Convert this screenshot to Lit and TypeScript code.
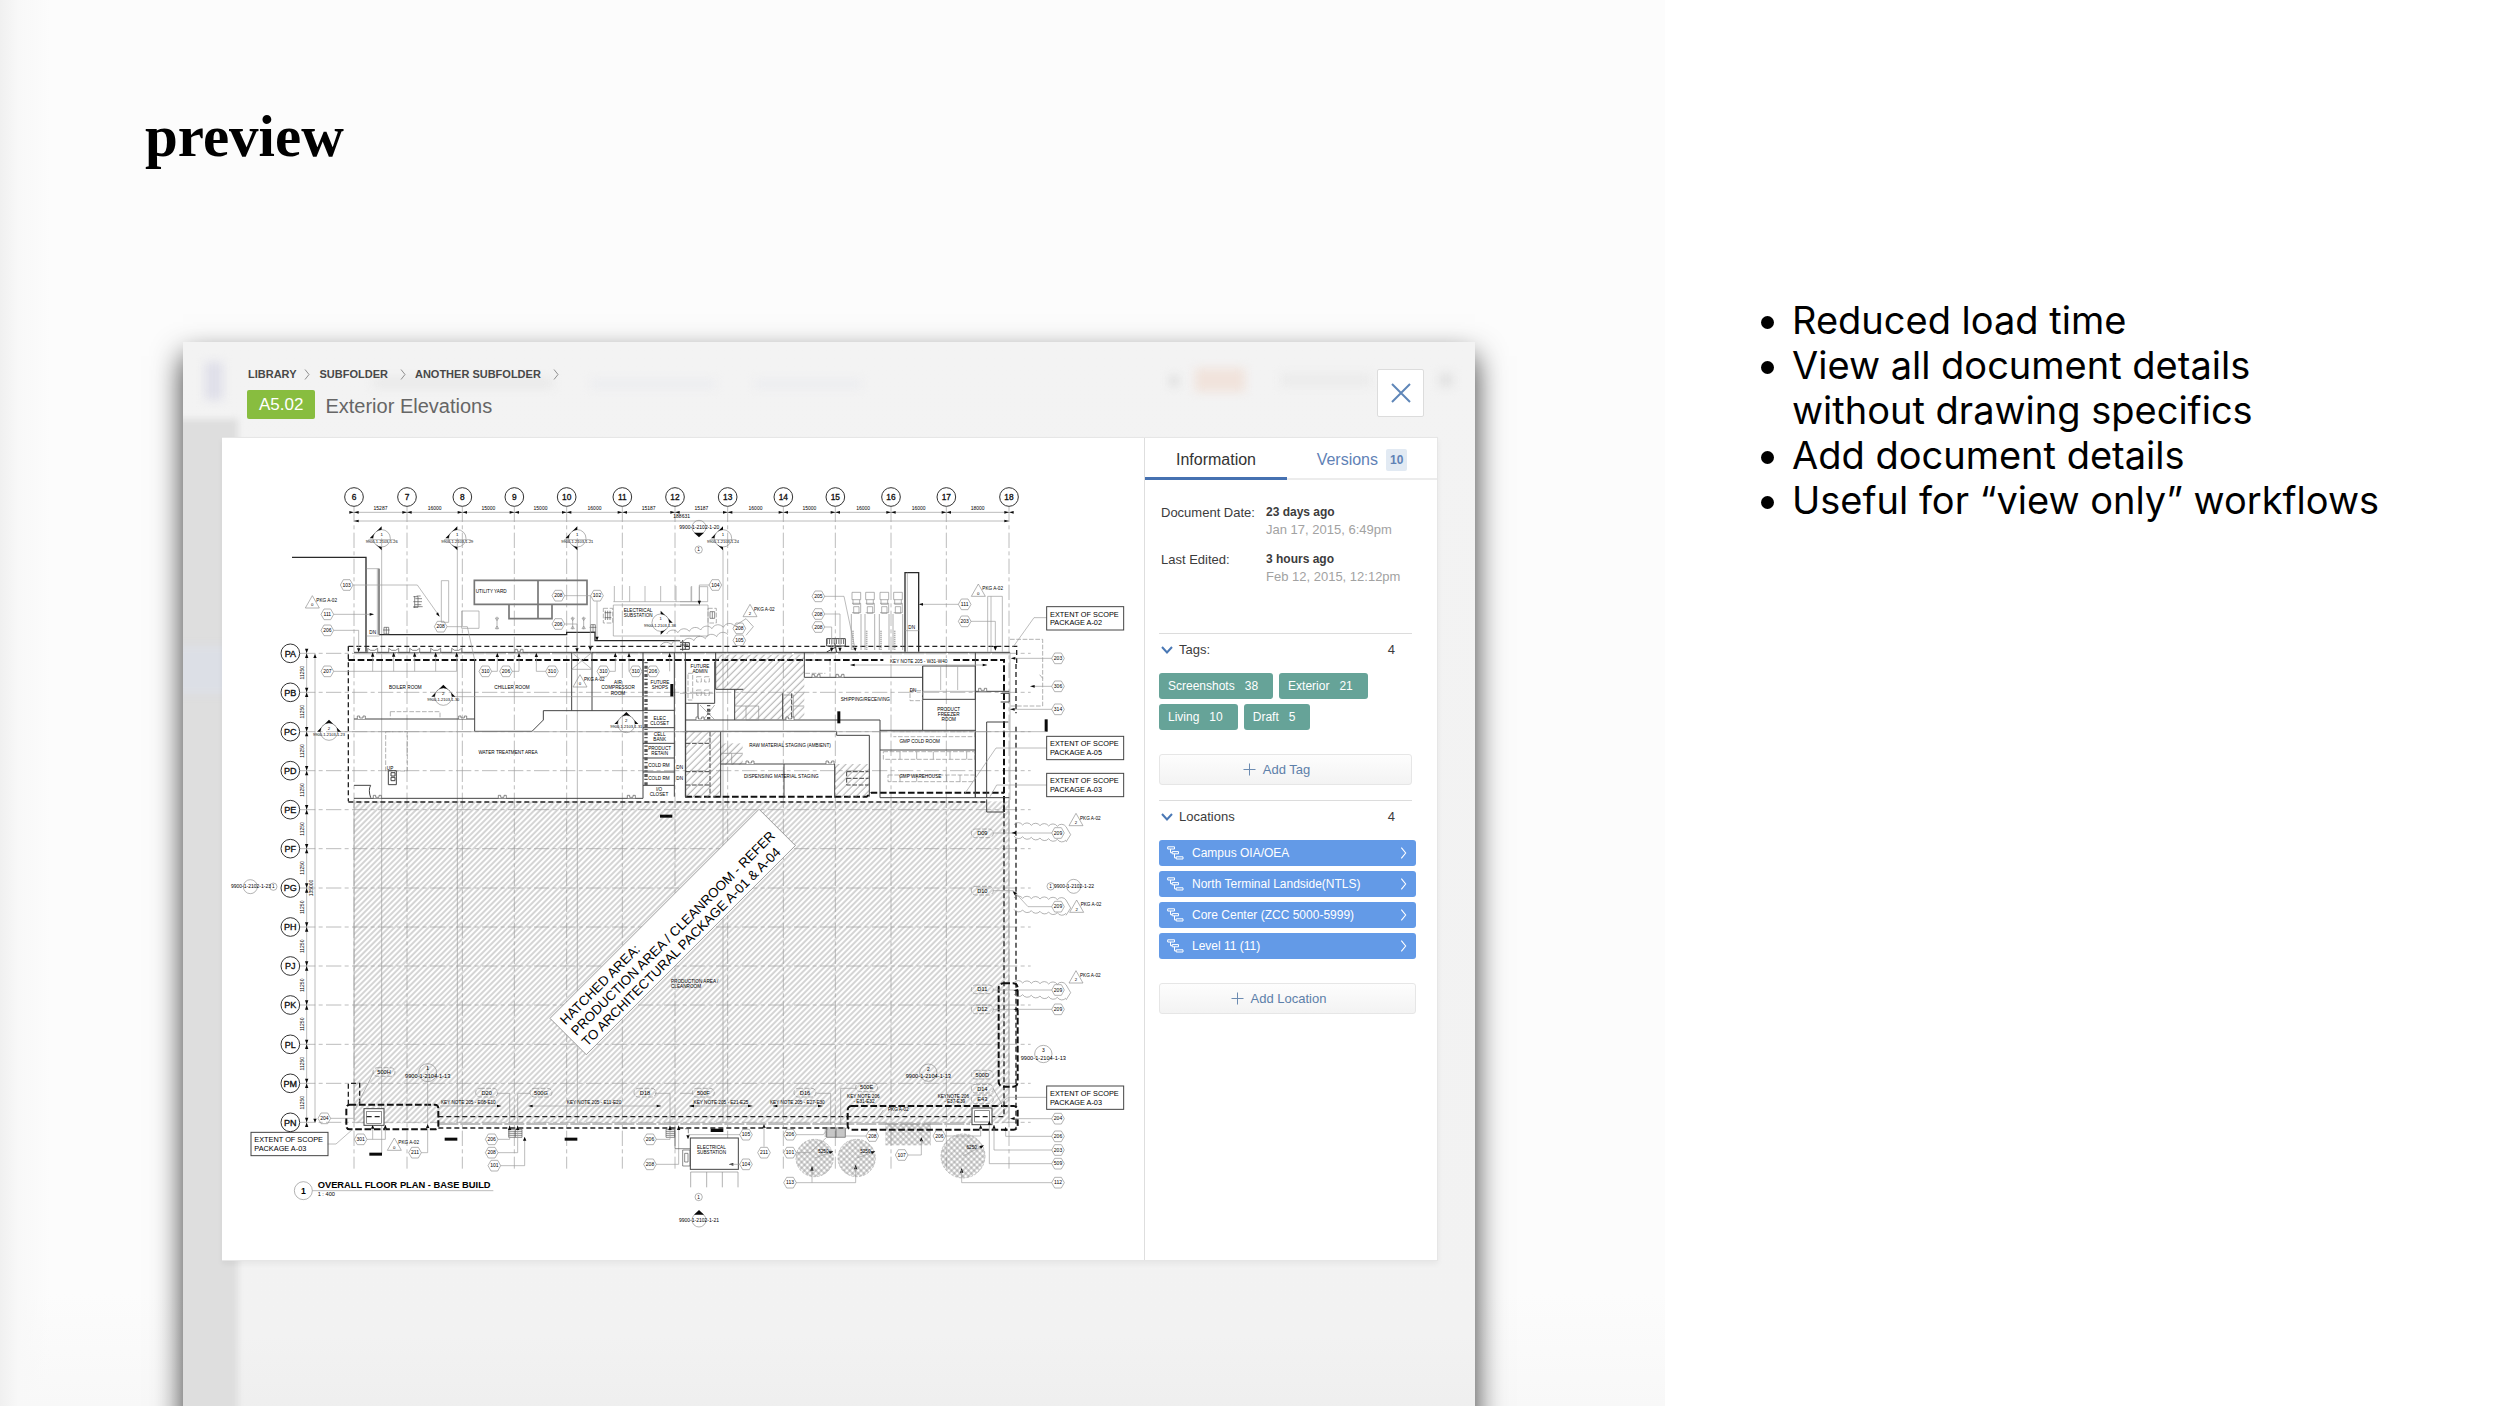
import { LitElement, html, svg, css } from "lit";
import { customElement } from "lit/decorators.js";

type Mark = [number, number, string];

/* ---------- Floor plan: small drawing helpers (plan units) ---------- */

const label = (x: number, y: number, text: string, size = 14, anchor = "middle") =>
  svg`<text class="lbl" x=${x} y=${y} font-size=${size} text-anchor=${anchor}>${text}</text>`;

const hex = ([x, y, t]: Mark) => svg`
  <path class="mark" d="M${x - 19} ${y}L${x - 10} ${y - 16}H${x + 10}L${x + 19} ${y}L${x + 10} ${y + 16}H${x - 10}Z"/>
  ${label(x, y + 5, t, 15)}`;

const pill = ([x, y, t]: Mark) => svg`
  <rect class="mark dashy" x=${x - 33} y=${y - 13} width="66" height="26" rx="13"/>
  ${label(x, y + 6, t, 17)}`;

const tri = ([x, y, t]: Mark) => svg`
  <path class="mark" d="M${x} ${y - 20}L${x + 21} ${y + 17}H${x - 21}Z"/>
  ${label(x, y + 12, t, 13)}
  ${label(x + 12, y - 1, "PKG A-02", 14, "start")}`;

/* Section marker whose arrow points left, with its sheet number across it. */
const sectionLeft = ([x, y, t]: Mark) => svg`
  <circle class="mark" cx=${x} cy=${y} r="26"/>
  <path class="ink" d="M${x} ${y - 36}L${x - 36} ${y}H${x - 26}A26 26 0 0 1 ${x} ${y - 26}Z"/>
  <path class="ink" d="M${x} ${y + 26}A26 26 0 0 1 ${x - 18} ${y + 18}L${x} ${y + 36}Z"/>
  <path class="thin" d="M${x - 40} ${y + 4}H${x + 40}"/>
  ${label(x, y - 6, "1", 13)}${label(x, y + 13, t, 12)}`;

/* Section marker whose arrow points up. */
const sectionUp = ([x, y, t]: Mark) => svg`
  <circle class="mark" cx=${x} cy=${y} r="26"/>
  <path class="ink" d="M${x} ${y - 36}L${x + 36} ${y}H${x + 26}A26 26 0 0 0 ${x - 26} ${y}H${x - 36}Z"/>
  ${label(x, y - 6, "2", 13)}${label(x, y + 13, t, 12)}`;

const scope = (x: number, y: number, code: string) => svg`
  <rect class="frame" x=${x} y=${y} width="231" height="70"/>
  ${label(x + 10, y + 30, "EXTENT OF SCOPE", 22, "start")}
  ${label(x + 10, y + 56, `PACKAGE ${code}`, 22, "start")}`;

const scallops = (x: number, y: number, n: number, step: number, rise: number) =>
  `M${x} ${y}` + Array.from({ length: n }, () => `a${Math.abs(step / 2) + 3} ${Math.abs(step / 2) + 3} 0 0 1 ${step} ${rise}`).join("");

const cloud = (x: number, y: number, n = 6) => svg`
  <path class="mark" d="${scallops(x, y - 24, n, 26, 1)}l14 24l-14 22${scallops(x + n * 26, y + 22, n, -26, -2)}"/>`;

const door = (x: number, y: number) =>
  svg`<path class="wallthin erase" d="M${x - 12} ${y}v-9h7v6h10v-6h7v9"/>`;

/* ---------- Floor plan: data ---------- */

const columns: Mark[] = [
  [402, 0, "6"], [561, 0, "7"], [727, 0, "8"], [883, 0, "9"], [1040, 0, "10"], [1207, 0, "11"], [1365, 0, "12"],
  [1523, 0, "13"], [1690, 0, "14"], [1846, 0, "15"], [2013, 0, "16"], [2179, 0, "17"], [2367, 0, "18"],
];
const spans = ["15287", "16000", "15000", "15000", "16000", "15187", "15187", "16000", "15000", "16000", "16000", "18000"];
const rows: Mark[] = ["PA", "PB", "PC", "PD", "PE", "PF", "PG", "PH", "PJ", "PK", "PL", "PM", "PN"].map(
  (n, i) => [211, Math.round(580 + i * 117.25), n] as Mark
);

const gridLayer = svg`
  <path class="thin" d="M402 157H2367M402 183H2367"/>
  <path class="thin" d="M260 580V1988M285 580V1988"/>
  ${columns.map(([x, , n]) => svg`
    <path class="grid" d="M${x} 140V2126"/>
    <path class="ink" d="M${x} 157l-14-4v8zM${x} 157l14-4v8z"/>
    <circle class="bubble" cx=${x} cy="111" r="28"/>
    <text class="lbl mid" x=${x} y="120" font-size="25" text-anchor="middle">${n}</text>`)}
  ${spans.map((s, i) => label((columns[i][0] + columns[i + 1][0]) / 2, 150, s, 15))}
  ${label(1385, 175, "188631", 15)}
  <path class="ink" d="M402 183l14-4v8zM2367 183l-14-4v8zM285 582l-5 12h10zM285 1988l-5-12h10z"/>
  ${rows.map(([x, y, n]) => svg`
    <path class="grid" d="M240 ${y}H2432"/>
    <path class="ink" d="M260 ${y}l-5-14h10zM260 ${y}l-5 14h10z"/>
    <circle class="bubble" cx=${x} cy=${y} r="28"/>
    <text class="lbl mid" x=${x} y=${y + 10} font-size="27" text-anchor="middle">${n}</text>`)}
  ${rows.slice(0, 12).map(([, y]) => svg`
    <text class="lbl" font-size="15" text-anchor="middle" transform="translate(253 ${y + 58}) rotate(-90)">11250</text>`)}
  <text class="lbl" font-size="15" text-anchor="middle" transform="translate(279 1284) rotate(-90)">135000</text>`;

const productionLayer = svg`
  <rect class="hatch" x="402" y="1024" width="1965" height="966"/>
  <path class="thin" d="M402 1020V1990M2367 1020V1990"/>
  <path class="thin" d="M485 235V2080M712 235V1990M1072 235V1990M1509 265V1990"/>
  ${label(1353, 1569, "PRODUCTION AREA /", 14, "start")}
  ${label(1353, 1585, "CLEANROOM", 14, "start")}`;

const northWest = svg`
  <path class="heavy" d="M216 292H438V575"/>
  <path class="thin" d="M440 326H478M440 528H478M472 326V524"/>
  <path class="heavy" d="M477 524H1040V517H1125V542H1380"/>
  <path class="double" d="M477 326V524"/>
  <path class="thin" d="M664 362h22v125h-22zM725 453h52v52h-52z"/>
  <path class="double" d="M763 361H1101V433H763ZM954 361V476M867 433V476H996V433"/>
  <path class="thin" d="M1180 435H1440M1180 435V528H1440M1183 378V425M1229 378V425M1275 378V425M1322 378V425M1368 378V425M1415 378V425M1180 425H1440"/>
  <path class="mark dashy" d="M1150 445h28v44h-28z"/>
  <path class="wallthin" d="M1156 452v28M1163 452v28M1170 452v28M1154 458h20M1154 473h20"/>
  <path class="wallthin" d="M580 410h14v32h-14M584 408v36M590 408h12M586 416h20M580 425h26M584 434h20M580 440h28"/>
  <path class="wallthin" d="M492 502h14v20h-14zM499 502v20M489 510h20M1112 494h14v22h-14zM1119 494v22M1109 502h20"/>
  <path class="mark" d="M831 470v38M826 474h10l-5 8zM826 506h10l-5-8zM1058 470v38M1053 474h10l-5 8zM1053 506h10l-5-8zM1091 470v38M1086 474h10l-5 8zM1086 506h10l-5-8z"/>
  <path class="wall" d="M402 577H1380"/>
  <path class="wall" d="M764 600V814H936L970 780V752H1269V577M1055 577V752M1116 577V752M402 777H764M402 1015H1269V600M1363 577V1010M1396 577V1010"/>
  <path class="wall" d="M1269 751H1363M1269 803H1363M1269 850H1363M1269 894H1363M1269 936H1363M1269 976H1363M402 976H452Q444 990 452 1013"/>
  <path class="thin" d="M1055 577L1116 628H1055L1116 577"/>
  <path class="mark dashy" d="M511 755H660V777M511 755V777M497 815h65v118h-65z"/>
  <path class="wall" d="M505 932h24v42h-24zM513 938h12v10h-12zM513 952h12v10h-12z"/>
  <path class="steps" d="M1278 606V976"/>
  <rect class="ink" x="1351" y="672" width="9" height="38"/>
  <rect class="ink" x="1320" y="1064" width="37" height="9"/>
  ${[458, 521, 584, 647, 710].map((x) => svg`<path class="thin" d="M${x} 634V585"/><path class="wallthin erase" d="M${x - 15} 577v-12l9 6h12l9-6v12"/><path class="ink" d="M${x} 577l-5 13h10z"/>`)}
  ${[832, 897, 949, 1186, 1227, 1349].map((x) => svg`<path class="thin" d="M${x} 634V585"/><path class="ink" d="M${x} 578l-5 13h10z"/>`)}
  ${[[424, 777], [728, 777], [472, 1015], [847, 1015], [1234, 1015], [897, 577]].map(([x, y]) => door(x, y))}
  <path class="thin" d="M399 375H592L657 467M341 463H460M341 511H416V577M341 634H710M681 500H742L764 600M1034 407H1111V577M1131 424V540M1034 492H1071V577M703 710H1363M360 815H1440M815 634h17M877 634h20M949 634h28M1169 634h17"/>
  <path class="ink" d="M659 470l-11-8 6-5zM462 463l-13-4v8zM416 577l-5-12h10zM1071 577l-5-12h10zM1111 572l-5-12h10zM1131 542l-5-12h10z"/>
  ${([[380, 375, "103"], [322, 463, "111"], [322, 511, "206"], [322, 634, "207"], [662, 500, "208"], [1015, 407, "208"],
    [1131, 407, "102"], [1015, 492, "206"], [796, 634, "310"], [858, 634, "206"], [996, 634, "310"], [1150, 634, "310"],
    [1247, 634, "310"], [1299, 634, "206"]] as Mark[]).map(hex)}
  ${([[277, 427, "0"], [1080, 664, "0"]] as Mark[]).map(tri)}
  ${([[485, 235, "9900-1-2103-1-26"], [712, 235, "9900-1-2103-1-29"], [1072, 235, "9900-1-2103-1-21"]] as Mark[]).map(sectionLeft)}
  ${([[327, 815, "9900-1-2103-1-23"], [670, 710, "9900-1-2103-1-30"], [1219, 792, "9900-1-2103-1-31"]] as Mark[]).map(sectionUp)}
  <circle class="mark" cx="1322" cy="488" r="26"/>
  <path class="ink" d="M1322 452l36 36h-10a26 26 0 0 0-26-26zM1322 524v-10a26 26 0 0 0 18-8z"/>
  ${label(1322, 481, "1", 12)}${label(1320, 501, "9900-1-2103-1-36", 12)}
  ${label(767, 399, "UTILITY YARD", 14, "start")}
  ${label(1211, 456, "ELECTRICAL", 14, "start")}${label(1211, 472, "SUBSTATION", 14, "start")}
  ${label(458, 522, "DN")}${label(510, 929, "UP")}${label(1379, 926, "DN")}${label(1379, 960, "DN")}
  ${label(556, 688, "BOILER ROOM")}${label(876, 688, "CHILLER ROOM")}${label(864, 883, "WATER TREATMENT AREA")}
  ${label(1194, 672, "AIR")}${label(1194, 688, "COMPRESSOR")}${label(1194, 704, "ROOM")}
  ${label(1320, 672, "FUTURE")}${label(1320, 688, "SHOPS")}
  ${label(1319, 780, "ELEC")}${label(1319, 796, "CLOSET")}${label(1319, 827, "CELL")}${label(1319, 843, "BANK")}
  ${label(1319, 870, "PRODUCT")}${label(1319, 886, "RETAIN")}${label(1317, 920, "COLD RM")}${label(1317, 960, "COLD RM")}
  ${label(1317, 994, "I/O")}${label(1317, 1009, "CLOSET")}`;

const northEast = svg`
  <g transform="translate(1380 0)">
    <rect class="hatchwide" x="107" y="584" width="266" height="104"/>
    <rect class="hatchwide" x="164" y="688" width="209" height="90"/>
    <rect class="hatchwide" x="17" y="813" width="105" height="200"/>
    <rect class="hatchwide" x="122" y="850" width="66" height="64"/>
    <rect class="hatchwide" x="464" y="912" width="104" height="100"/>
    <path class="heavy" d="M675 575V338H716V575"/>
    <path class="thin" d="M682 338V575M675 512H716M923 575V409H967V575M933 409V575M0 528H84V435H0M0 425H83V380H58V430M33 380V425"/>
    <path class="mark dashy" d="M84 445h25v44H84z"/>
    <path class="wallthin" d="M90 455h14v20H90zM97 455v20"/>
    ${[516, 557, 600, 641].map((x) => svg`
      <path class="mark" d="M${x} 397h26v22h-26zM${x + 3} 419v14h20v-14M${x} 430h26v28h-26M${x + 5} 440h16v20h-16zM${x - 2} 462V570M${x + 27} 462V570"/>
      <path class="tyre" d="M${x + 3} 512V570"/>`)}
    <path class="wall" d="M0 577H990M17 605V1013M17 730H104V605M54 730V780M107 577V688H190M164 688V780M308 700V778M373 577V652H728M17 780H600V812"/>
    <path class="wall" d="M728 618H886V718H728ZM728 618V810M600 811H886V1013M600 811V1013M600 870H886M886 577V1013M886 694H988M920 1013V786H985M17 814H470V826H568V1010M122 814V1013M122 912H464V1013M312 912V1013M600 1013H988"/>
    <path class="thin" d="M782 618V690M833 618V690M728 694H886"/>
    <path class="wall" d="M920 1018V1056H972V1018"/>
    <path class="mark" d="M198 738h38v42h-38zM312 705h28v70M164 738h34M340 738h32M122 880h66M155 880v34M60 735l44 44M104 735l-34 44"/>
    <path class="mark dashy" d="M610 875H884V898H610ZM624 945H884V965H624ZM640 815H884V830H640M690 692h38v30h-38z"/>
    <path class="mark" d="M660 875v23M710 875v23M760 875v23M810 875v23M860 875v23M660 945v20M710 945v20M800 945v20M840 945v20"/>
    <path class="mark dashy" d="M376 600h74v52M376 640h60M24 640h14v80h-14zM50 650h14v16h-14zM74 650h14v16h-14zM50 690h14v16h-14zM74 690h14v16h-14z"/>
    <path class="steps" d="M86 735V778"/>
    <path class="wall dashy" d="M90 815V1000M17 850H90M17 935H90M17 975H90M500 935V975H566M500 935H566M500 955H566M335 700V778"/>
    <path class="tread" d="M440 545H496"/>
    <path class="wall" d="M440 536h56v22h-56zM464 550l6 26M470 560l-30 16"/>
    <path class="mark dashy" d="M990 538H1088V738H992M1088 655l-10-12"/>
    <path class="wall" d="M962 700h26v26h-26"/>
    <path class="thin" d="M990 577V1020"/>
    <rect class="ink" x="472" y="754" width="9" height="36"/>
    <rect class="ink" x="1094" y="778" width="9" height="37"/>
    ${[[480, 652], [408, 652], [908, 694], [330, 780], [60, 780], [210, 912], [450, 912]].map(([x, y]) => door(x, y))}
    <path class="thin" d="M88 375H58V430M0 700H100M0 815H1098M433 409H492L526 570M433 462H480V575M433 501H455V575M835 433H720M873 484H946V570M1115 595H998M1115 679H1056M1115 748H992M1100 473H1062L1000 560M1100 864H948L855 1000M1100 975H950L930 1010M512 615H920"/>
    <path class="ink" d="M716 433l13-4v8zM946 572l-6-14h12zM992 595l14-4v8zM1050 679l14-4v8zM990 748l14-4v8zM58 434l-5-12h10zM526 574l-6-11h10zM480 575l-5-12h10zM455 575l-5-12h10zM510 615l14-4v8zM922 615l-14-4v8z"/>
    <path class="wall" d="M0 548h28v20H0M0 555h24M8 540v32M16 548v20"/>
    ${([[106, 375, "104"], [178, 505, "208"], [178, 541, "105"], [415, 409, "205"], [415, 462, "208"], [415, 501, "208"],
      [854, 433, "111"], [854, 484, "203"], [1134, 595, "203"], [1134, 679, "306"], [1134, 748, "314"]] as Mark[]).map(hex)}
    ${([[210, 453, "2"], [895, 392, "0"]] as Mark[]).map(tri)}
    <path class="mark" d="${scallops(-40, 522, 6, 34, -4)}l34-22l22 24l-22 26"/>
    <path class="mark" d="${scallops(-60, 560, 6, 34, -6)}"/>
    ${sectionLeft([129, 235, "9900-1-2103-1-24"])}
    <circle class="mark" cx="57" cy="202" r="21"/><path class="ink" d="M42 218h30l-15 14z"/>
    ${label(58, 207, "9900-1-2102-1-20", 15)}
    <circle class="mark" cx="56" cy="269" r="11"/>${label(56, 274, "1")}
    ${label(695, 506, "DN")}${label(699, 697, "DN")}
    ${label(60, 623, "FUTURE")}${label(60, 639, "ADMIN")}
    <path class="erasefill" d="M622 594h196v18h-196z"/>
    ${label(716, 608, "KEY NOTE 205 - W31-W40")}
    ${label(556, 723, "SHIPPING/RECEIVING")}
    ${label(806, 752, "PRODUCT")}${label(806, 768, "FREEZER")}${label(806, 784, "ROOM")}
    ${label(719, 848, "GMP COLD ROOM")}${label(721, 954, "GMP WAREHOUSE")}
    ${label(330, 861, "RAW MATERIAL STAGING (AMBIENT)")}
    ${label(304, 955, "DISPENSING MATERIAL STAGING")}
    ${scope(1100, 440, "A-02")}${scope(1100, 829, "A-05")}${scope(1100, 940, "A-03")}
  </g>`;

const southWest = svg`
  <g transform="translate(0 1020)">
    <rect class="ink" x="448" y="1058" width="38" height="9"/>
    <rect class="ink" x="674" y="1013" width="38" height="9"/>
    <rect class="ink" x="1034" y="1013" width="38" height="9"/>
    <rect class="erasefill wall" x="432" y="926" width="60" height="50"/>
    <rect class="wallthin" x="440" y="934" width="44" height="36"/>
    <path class="dash" d="M440 950H484"/>
    <rect class="dashheavy" x="379" y="914" width="276" height="74" rx="10"/>
    <path class="dash" d="M385 914V850H419V914"/>
    <path class="wallthin" d="M866 988h40v24h-40zM1338 988h26v24h-26zM866 994h40M866 1000h40M866 1006h40M1338 994h26M1338 1000h26M1338 1006h26M886 988v24"/>
    <path class="thin" d="M332 955H400M441 1018H496V975M458 1018V975M604 1058H623V800M834 1018H869V980M834 1058H893V980M842 1097H914V1015M833 880H869V970M930 880H893V970M1309 1018H1350V980M1309 1093H1376V980M1305 880H1350V970M460 818L405 930M323 1032H348L398 988M660 918H840M930 918H1322M1410 918H1440"/>
    <path class="ink" d="M845 918l-14-4v8zM924 918l14-4v8zM1324 918l-14-4v8zM1408 918l14-4v8zM458 974l-5 12h10zM496 974l-5 12h10zM623 972l-5 12h10zM914 1010l-5 12h10zM869 976l-5 14h10zM893 976l-5 14h10zM1350 976l-5 14h10zM1376 976l-5 14h10z"/>
    ${([[313, 955, "204"], [422, 1018, "301"], [585, 1058, "211"], [815, 1018, "206"], [815, 1058, "208"], [823, 1097, "101"],
      [1290, 1018, "206"], [1290, 1093, "208"]] as Mark[]).map(hex)}
    ${([[492, 816, "500H"], [800, 878, "D20"], [963, 878, "500G"], [1275, 878, "D18"]] as Mark[]).map(pill)}
    ${tri([523, 1034, "0"])}
    ${label(745, 911, "KEY NOTE 205 - E08-E10")}${label(1122, 911, "KEY NOTE 205 - E11-E20")}
    <circle class="mark" cx="623" cy="818" r="27"/>${label(623, 810, "1", 15)}${label(623, 833, "9900-1-2104-1-13", 17)}
    <circle class="mark" cx="91" cy="260" r="21"/><circle class="mark" cx="160" cy="260" r="11"/>
    ${label(93, 265, "9900-1-2102-1-23", 15)}${label(160, 265, "1")}
    ${scope(93, 997, "A-03")}
    <circle class="mark" cx="250" cy="1172" r="27"/>
    <text class="lbl strong" x="250" y="1181" font-size="26" text-anchor="middle">1</text>
    <path class="thin" d="M277 1172H820"/>
    <text class="lbl strong" x="293" y="1165" font-size="28">OVERALL FLOOR PLAN - BASE BUILD</text>
    ${label(293, 1187, "1 : 400", 17, "start")}
  </g>`;

const southEast = svg`
  <g transform="translate(1380 1020)">
    <rect class="ink" x="92" y="986" width="38" height="10"/>
    <rect class="erasefill frame" x="31" y="1014" width="144" height="94"/>
    <path class="wallthin" d="M8 1050h22v48H8zM14 1060h10v26H14zM-15 980v66h46M25 1000v-14h-10"/>
    <path class="mark" d="M32 1162V1116H174V1162M80 1116V1162M127 1116V1162"/>
    <path class="wallthin" d="M440 984h56v28h-56zM434 990h62M434 996h62M434 1002h62M434 1008h62M468 984v28"/>
    <rect class="cross" x="616" y="970" width="137" height="66"/>
    <circle class="tree" cx="404" cy="1074" r="56"/><circle class="tree" cx="530" cy="1074" r="56"/><circle class="tree" cx="849" cy="1068" r="66"/>
    <path class="thin" d="M404 1074L456 1056M530 1074L582 1056M849 1068L908 1038"/>
    <path class="ink" d="M460 1054l-14 0 4 8zM586 1054l-14 0 4 8zM912 1036l-14 2 5 8zM396 1098l-5 14h10zM527 1094l-5 14h10zM845 1104l-5 14h10zM724 1012l-5 12h10zM252 972l-5 12h10zM146 1093l14-4v8zM24 1018l-5-12h10z"/>
    <rect class="dashheavy" x="503" y="918" width="510" height="71" rx="12"/>
    <rect class="dashheavy" x="956" y="550" width="57" height="310" rx="14"/>
    <rect class="erasefill frame" x="876" y="924" width="60" height="50"/>
    <rect class="wallthin" x="884" y="932" width="44" height="34"/>
    <path class="dash" d="M884 950H928"/>
    <path class="thin" d="M25 1004H180M179 1093H150M252 1040V980M349 1004H430L445 985M349 1058H390L440 1012M496 1008H558M684 1065H724V1020M797 1008H902V980M349 1148H527V1100M396 1148V1105M1115 1148H845V1110M1115 1091H928V975M1115 1050H942V975M1115 1009H977V985M1115 956H1000M1115 628H940M1115 570H940M1115 99H940M940 272H1000L1044 320H1115M1100 892H985L950 920M410 880H452V975M530 865H482V975M940 866L975 930M28 918H218M278 918H428M590 960L610 930M0 880H40"/>
    <path class="ink" d="M28 918l14-4v8zM218 918l-14-4v8zM278 918l14-4v8zM428 918l-14-4v8zM994 99l14-5v9zM998 274l14 5-8 7zM1000 571l14-4v8zM1000 628l14-4v8zM990 956l14-5v9zM902 974l-5 12h10zM942 974l-5 12h10zM977 980l-5 12h10zM928 962l-5 12h10z"/>
    ${cloud(1002, 98)}${cloud(1002, 318)}${cloud(1002, 572)}
    ${([[1134, 99, "209"], [1134, 320, "209"], [1134, 570, "209"], [1134, 628, "209"], [1134, 956, "204"], [1134, 1009, "206"],
      [1134, 1050, "203"], [1134, 1091, "509"], [1134, 1148, "112"], [198, 1004, "105"], [198, 1093, "104"], [252, 1058, "211"],
      [330, 1004, "206"], [330, 1058, "101"], [577, 1008, "208"], [665, 1065, "107"], [778, 1008, "206"], [330, 1148, "113"]] as Mark[]).map(hex)}
    ${([[70, 878, "500F"], [375, 878, "D16"], [560, 862, "500E"], [907, 100, "D09"], [907, 272, "D10"], [907, 568, "D11"],
      [907, 628, "D12"], [907, 824, "500D"], [907, 866, "D14"], [907, 898, "E43"]] as Mark[]).map(pill)}
    ${([[1188, 60, "2"], [1190, 320, "2"], [1188, 532, "2"]] as Mark[]).map(tri)}
    ${label(430, 1060, "5250")}${label(556, 1060, "5250")}${label(875, 1046, "6250")}
    ${label(51, 1047, "ELECTRICAL", 14, "start")}${label(51, 1063, "SUBSTATION", 14, "start")}
    ${label(123, 911, "KEY NOTE 205 - E21-E25")}${label(352, 911, "KEY NOTE 205 - E27-E30")}
    ${label(550, 894, "KEY NOTE 206")}${label(552, 910, "- E31-E32")}
    ${label(820, 894, "KEYNOTE 206")}${label(824, 910, "- E37-E39")}
    ${label(655, 933, "PKG A-02")}
    <circle class="mark" cx="745" cy="818" r="26"/>${label(745, 812, "2", 15)}${label(745, 834, "9900-1-2104-1-13", 17)}
    <circle class="mark" cx="1090" cy="762" r="26"/>${label(1090, 757, "3", 15)}${label(1090, 780, "9900-1-2104-1-13", 17)}
    <circle class="mark" cx="1181" cy="259" r="21"/><circle class="mark" cx="1112" cy="259" r="11"/>
    ${label(1182, 264, "9900-1-2102-1-22", 15)}${label(1112, 264, "1")}
    <circle class="mark" cx="56" cy="1191" r="11"/>${label(56, 1196, "1")}
    <circle class="mark" cx="57" cy="1260" r="21"/><path class="ink" d="M57 1230l15 14H42z"/>
    ${label(57, 1265, "9900-1-2102-1-21", 15)}
    ${scope(1100, 858, "A-03")}
  </g>`;

const boundaryLayer = svg`
  <path class="dash" d="M385 559H2390V612M385 559V1024M2388 612V760M2388 800V2004M385 1026H2300"/>
  <path class="dashheavy" d="M385 600H1990M2200 600H2352V1060"/>
  <path class="dash" d="M2352 1060V1970"/>
  <path class="dashheavy" d="M1396 1010H1940L1955 998H2352"/>
  <path class="dash" d="M655 1970H2352M655 2004H1880"/>
  <path class="band" d="M402 580H2367M655 1992H2250"/>`;

const noteLayer = svg`
  <g transform="translate(990 1675) rotate(-45)">
    <rect class="note" width="887" height="154"/>
    <text class="lbl" x="18" y="48" font-size="40">HATCHED AREA:</text>
    <text class="lbl" x="18" y="94" font-size="40">PRODUCTION AREA / CLEANROOM - REFER</text>
    <text class="lbl" x="18" y="140" font-size="40">TO ARCHITECTURAL PACKAGE A-01 &amp; A-04</text>
  </g>`;

@customElement("floor-plan")
export class FloorPlan extends LitElement {
  static styles = css`
    :host { display: block; }
    svg { display: block; width: 100%; height: auto; font-family: "Liberation Sans", Arial, sans-serif; }
    path, rect, circle { fill: none; }
    .lbl { fill: #000; }
    .mid { stroke: #1c1c1c; stroke-width: 1; }
    .strong { font-weight: 700; }
    .ink { fill: #0a0a0a; }
    .thin { stroke: #9a9a9a; stroke-width: 2; }
    .mark { stroke: #8c8c8c; stroke-width: 2; }
    .grid { stroke: #9c9c9c; stroke-width: 2; stroke-dasharray: 46 10 12 10; }
    .bubble { fill: #fff; stroke: #333; stroke-width: 3; }
    .heavy { stroke: #2a2a2a; stroke-width: 4; }
    .double { stroke: #777; stroke-width: 5; }
    .wall { stroke: #444; stroke-width: 3; }
    .wallthin { stroke: #555; stroke-width: 2; }
    .dashy { stroke-dasharray: 14 5; }
    .erase { fill: #fff; }
    .erasefill { fill: #fff; }
    .frame { stroke: #444; stroke-width: 3; }
    .note { fill: #fff; stroke: #777; stroke-width: 2; }
    .dash { stroke: #222; stroke-width: 4; stroke-dasharray: 15 9; }
    .dashheavy { stroke: #111; stroke-width: 6; stroke-dasharray: 20 8; }
    .band { stroke: #bdbdbd; stroke-width: 6; stroke-dasharray: 60 6; }
    .steps { stroke: #555; stroke-width: 10; stroke-dasharray: 4 7 9 5; }
    .tread { stroke: #777; stroke-width: 14; stroke-dasharray: 3 4; }
    .tyre { stroke: #999; stroke-width: 5; stroke-dasharray: 3 3; }
    .hatch { fill: url(#hatch); }
    .hatchwide { fill: url(#hatchwide); }
    .cross { fill: url(#cross); }
    .tree { fill: url(#cross); stroke: #aaa; stroke-width: 2; stroke-dasharray: 8 4; }
    .stroke { stroke: #7e7e7e; stroke-width: 2; }
  `;

  render() {
    return html`
      <svg viewBox="6 -66 2766 2466" role="img" aria-label="Overall floor plan">
        <defs>
          <pattern id="hatch" width="12" height="12" patternUnits="userSpaceOnUse" patternTransform="rotate(45)">
            <path class="stroke" d="M6 0V12"/>
          </pattern>
          <pattern id="hatchwide" width="15" height="15" patternUnits="userSpaceOnUse" patternTransform="rotate(45)">
            <path class="stroke" d="M7 0V15"/>
          </pattern>
          <pattern id="cross" width="12" height="12" patternUnits="userSpaceOnUse" patternTransform="rotate(45)">
            <path class="stroke" d="M6 0V12M0 6H12"/>
          </pattern>
        </defs>
        ${productionLayer}${gridLayer}${boundaryLayer}${northWest}${northEast}${southWest}${southEast}${noteLayer}
      </svg>`;
  }
}

/* ---------- Document preview ---------- */

const chevronRight = (w: number, h: number) =>
  html`<svg class="chev" width=${w} height=${h} viewBox="0 0 6 11" aria-hidden="true"><path d="M1 .5L5 5.5L1 10.5"/></svg>`;
const chevronDown = html`<svg class="down" width="12" height="8" viewBox="0 0 12 8" aria-hidden="true"><path d="M1 1L6 6.5L11 1"/></svg>`;
const plus = html`<svg class="plus" width="13" height="13" viewBox="0 0 13 13" aria-hidden="true"><path d="M6.500 .5V12.500M.5 6.500H12.500"/></svg>`;
const levels = html`<svg class="levels" width="17" height="14" viewBox="0 0 17 14" aria-hidden="true">
  <path d="M.7 .8H7.500V3H.7ZM5.200 5.600H11.500V7.800H5.200ZM9.200 10.800H16V13H9.200ZM3.500 3V6.700H5.200M7.500 7.800V11.900H9.200"/></svg>`;

@customElement("app-root")
export class AppRoot extends LitElement {
  static styles = css`
    :host { display: block; color: #3c3c3c; font-family: "Liberation Sans", Arial, Helvetica, sans-serif; }
    *, *::before { box-sizing: border-box; }
    h1, h2, ul, ol, dl, dd { margin: 0; padding: 0; }
    ul, ol { list-style: none; }
    button { font: inherit; color: inherit; border: 0; background: none; padding: 0; margin: 0; cursor: pointer; }
    a { color: inherit; text-decoration: none; }
    svg { fill: none; flex: none; }

    .slide { display: grid; grid-template-columns: 1665fr 835fr; height: 100vh; overflow: hidden; background: #fff; }
    .stage {
      display: flex; flex-direction: column; overflow: hidden;
      background: linear-gradient(to right, #f0f0f0, #f8f8f8 18px, rgba(252, 252, 252, 0) 50px), linear-gradient(#fcfcfc 92%, #f8f8f8);
    }
    .heading { padding: 104px 0 0 145px; font: 700 59px/64px "Liberation Serif", "Times New Roman", serif; color: #000; }
    .window {
      position: relative; flex: 1; margin: 174px 190px -40px 183px;
      background: linear-gradient(#f3f3f3, #f2f2f2 90%, #ededed);
      box-shadow: 0 14px 28px rgba(0, 0, 0, .78);
    }

    .backdrop { position: absolute; inset: 0; overflow: hidden; }
    .rail { position: absolute; left: -10px; top: 77px; bottom: -10px; width: 65px; background: #dedede; filter: blur(3px); }
    .haze { position: absolute; filter: blur(5px); }
    .logo { left: 22px; top: 20px; width: 18px; height: 38px; background: #dfdfe9; }
    .selected { left: -10px; top: 304px; width: 62px; height: 48px; background: #dcdfe6; }
    .alert { left: 1012px; top: 26px; width: 50px; height: 24px; background: #f1e3dc; }
    .bell { left: 986px; top: 34px; width: 10px; height: 10px; background: #dedede; }
    .account { left: 1098px; top: 32px; width: 90px; height: 12px; background: #ebebeb; }
    .help { left: 1256px; top: 31px; width: 14px; height: 14px; background: #e2e2e2; }
    .nav { left: 190px; top: 36px; width: 180px; height: 10px; background: #e9e9e9; }
    .linka { left: 408px; top: 38px; width: 124px; height: 8px; background: #ebecf0; }
    .linkb { left: 572px; top: 38px; width: 106px; height: 8px; background: #ebecf0; }

    .bar { position: relative; display: flex; justify-content: space-between; height: 95px; padding: 25px 51px 0 64px; }
    .crumbs { display: flex; gap: 8px; height: 14px; font: 700 11px/14px "Liberation Sans", Arial, sans-serif; color: #484848; }
    .crumb { display: flex; align-items: center; gap: 8px; padding-left: 1px; }
    .crumb + .crumb { gap: 12px; }
    .crumb .chev { stroke: #8e8e8e; }
    .name { display: flex; align-items: flex-start; gap: 10px; margin-top: 9px; }
    .code { padding: 0 12px; border-radius: 2px; background: #88bd3f; color: #fff; font-size: 17px; line-height: 29px; }
    .title { font-size: 20px; line-height: 29px; font-weight: 400; color: #666; padding-top: 2px; }
    .close {
      display: grid; place-items: center; width: 47px; height: 48px; margin-top: 2px;
      background: #fff; border: 1px solid #dcdcdc; border-radius: 2px;
    }
    .close svg { stroke: #5f86b8; stroke-width: 2; }

    .document {
      position: relative; display: flex; margin: 0 37px 0 39px; background: #fff;
      border: 1px solid #e6e6e6; border-left: 0; box-shadow: 0 3px 6px rgba(0, 0, 0, .05);
    }
    .drawing { flex: 1; min-width: 0; }
    .details { width: 293px; flex: none; border-left: 1px solid #dedede; }

    .tabs { display: grid; grid-template-columns: 142px 1fr; height: 42px; font-size: 16px; }
    .tab { display: flex; align-items: center; justify-content: center; gap: 8px; padding-top: 4px; border-bottom: 2px solid #ececec; color: #5f82b6; }
    .tab.active { color: #333; border-bottom: 3px solid #4671b1; }
    .pill { padding: 0 4px; border-radius: 2px; background: #e2eaf3; font-size: 12px; line-height: 22px; font-weight: 700; }

    .facts { display: grid; grid-template-columns: 105px 1fr; row-gap: 13px; margin: 24px 0 48px 16px; font-size: 13px; line-height: 17px; }
    .ago { display: block; font-size: 12px; font-weight: 700; }
    .when { display: block; color: #a2a2a2; }

    .group { margin: 0 25px 15px 14px; border-top: 1px solid #dcdcdc; padding-top: 7px; font-size: 13px; }
    .toggle { display: flex; align-items: center; width: 100%; padding: 0 17px 0 2px; font-size: 13px; line-height: 17px; }
    .toggle .down { margin-right: 6px; stroke: #4a78b5; stroke-width: 2; }
    .count { margin-left: auto; }
    .tags { display: flex; flex-wrap: wrap; gap: 5px 6px; margin: 15px 0 24px; }
    .tag { display: flex; gap: 10px; padding: 0 15px 0 9px; border-radius: 3px; background: #66a398; color: #fff; font-size: 12px; line-height: 26px; }
    .add {
      display: flex; align-items: center; justify-content: center; gap: 7px; width: 100%; height: 31px; padding-right: 18px;
      border: 1px solid #e6e6e6; border-radius: 3px; background: linear-gradient(#fdfdfd, #f3f3f3); color: #5d80a9; font-size: 13px;
    }
    .plus { stroke: #6d8cb2; }
    .wide { margin-right: -4px; }
    .places { display: grid; gap: 5px; margin: 15px 0 24px; }
    .place {
      display: flex; align-items: center; width: 100%; height: 26px; padding: 0 9px 0 8px;
      border-radius: 3px; background: #639ae7; color: #fff; font-size: 12px;
    }
    .levels { margin-right: 8px; stroke: #fff; stroke-width: 1; }
    .place .chev { margin-left: auto; stroke: #fff; stroke-width: 1; }

    .notes { padding: 298px 112px 0 92px; color: #000; font: 400 38px/45px Inter, "Open Sans", sans-serif; }
    .notes li { display: flex; gap: 18px; }
    .notes li::before { content: ""; flex: none; width: 13px; height: 13px; margin: 18px 0 0 4px; border-radius: 50%; background: #000; }
  `;

  private crumbs = ["LIBRARY", "SUBFOLDER", "ANOTHER SUBFOLDER"];
  private tags: [string, number][] = [["Screenshots", 38], ["Exterior", 21], ["Living", 10], ["Draft", 5]];
  private places = ["Campus OIA/OEA", "North Terminal Landside(NTLS)", "Core Center (ZCC 5000-5999)", "Level 11 (11)"];
  private facts = [
    ["Document Date:", "23 days ago", "Jan 17, 2015, 6:49pm"],
    ["Last Edited:", "3 hours ago", "Feb 12, 2015, 12:12pm"],
  ];
  private points = [
    "Reduced load time",
    "View all document details without drawing specifics",
    "Add document details",
    "Useful for “view only” workflows",
  ];

  render() {
    return html`
      <main class="slide">
        <section class="stage">
          <h1 class="heading">preview</h1>
          <div class="window">
            <div class="backdrop" aria-hidden="true">
              <div class="rail"></div>
              ${["logo", "selected", "nav", "linka", "linkb", "bell", "alert", "account", "help"].map((n) => html`<div class="haze ${n}"></div>`)}
            </div>
            <header class="bar">
              <div>
                <ol class="crumbs">
                  ${this.crumbs.map((c) => html`<li class="crumb"><a href="#">${c}</a>${chevronRight(6, 11)}</li>`)}
                </ol>
                <div class="name"><span class="code">A5.02</span><h2 class="title">Exterior Elevations</h2></div>
              </div>
              <button class="close" aria-label="Close">
                <svg width="20" height="20" viewBox="0 0 20 20"><path d="M1 1L19 19M19 1L1 19"/></svg>
              </button>
            </header>
            <div class="document">
              <floor-plan class="drawing"></floor-plan>
              <aside class="details">
                <div class="tabs" role="tablist">
                  <button class="tab active" role="tab" aria-selected="true">Information</button>
                  <button class="tab" role="tab" aria-selected="false">Versions <span class="pill">10</span></button>
                </div>
                <dl class="facts">
                  ${this.facts.map(([k, ago, when]) => html`<dt>${k}</dt><dd><span class="ago">${ago}</span><span class="when">${when}</span></dd>`)}
                </dl>
                <section class="group">
                  <button class="toggle" aria-expanded="true">${chevronDown}Tags:<span class="count">4</span></button>
                  <ul class="tags">
                    ${this.tags.map(([t, n]) => html`<li class="tag"><span>${t}</span><span>${n}</span></li>`)}
                  </ul>
                  <button class="add">${plus}Add Tag</button>
                </section>
                <section class="group">
                  <button class="toggle" aria-expanded="true">${chevronDown}Locations<span class="count">4</span></button>
                  <div class="wide">
                    <ul class="places">
                      ${this.places.map((p) => html`<li><button class="place">${levels}${p}${chevronRight(7, 12)}</button></li>`)}
                    </ul>
                    <button class="add">${plus}Add Location</button>
                  </div>
                </section>
              </aside>
            </div>
          </div>
        </section>
        <ul class="notes">
          ${this.points.map((p) => html`<li><span>${p}</span></li>`)}
        </ul>
      </main>`;
  }
}
